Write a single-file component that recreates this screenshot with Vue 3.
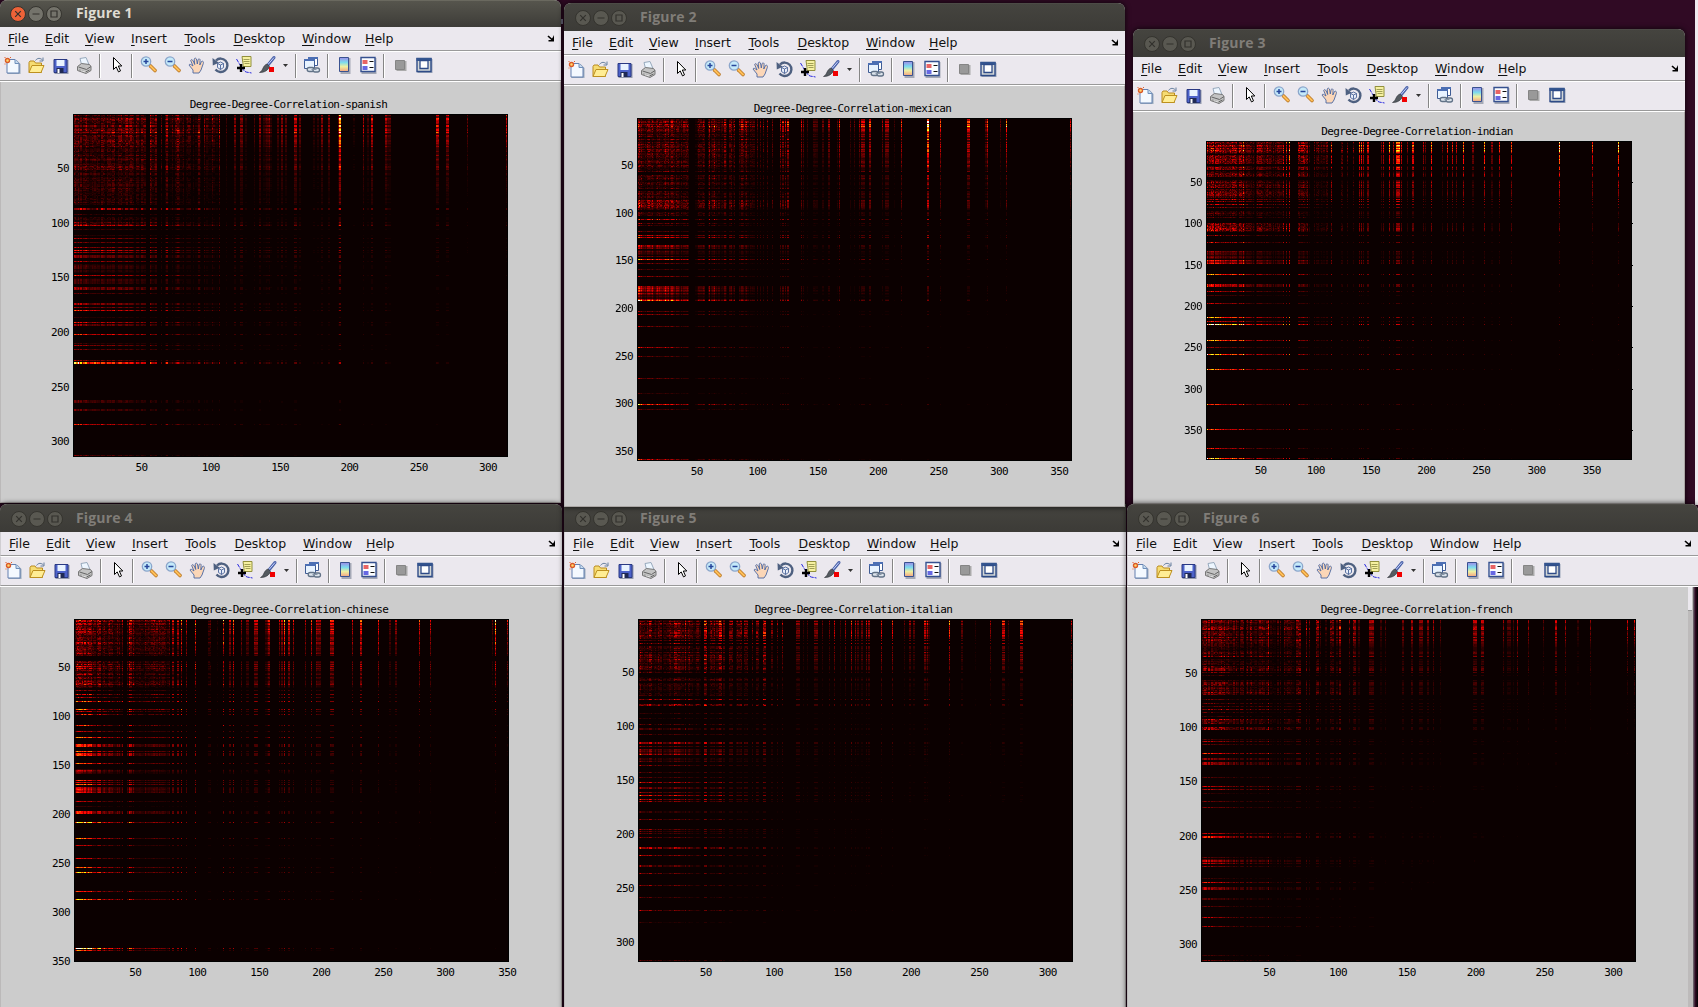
<script setup>
import { onMounted, ref } from 'vue'

const menus = ['File', 'Edit', 'View', 'Insert', 'Tools', 'Desktop', 'Window', 'Help']

// frame: extent of the axes in the units used by the cols/rows bands ("from-to:level" or "at:level")
const figures = [
  {
    id: 1, name: 'spanish', n: 314, x: 0, y: 0, w: 561, h: 503, top: 0, plotX: 73, plotY: 114, plotW: 435, plotH: 343,
    ticks: [50, 100, 150, 200, 250, 300], frame: [70, 72, 1374, 1100], decay: 5,
    cols: '70-285:.2 300-320:.2 303:.3 335:.15 348-400:.18 350:.3 384:.28 400-450:.12 446:.26 462-500:.12 465:.2 490:.25 508:.3 530:.1 555:.22 572-578:.22 590:.07 614:.14 630:.24 642-664:.22 686:.14 698:.24 708:.15 732-738:.36 751:.18 793:.08 805:.08 817:.24 838:.22 867:.22 871:.95 911:.05 943:.32 952:.12 966:.4 1006:.32 1012-1019:.16 1160-1166:.42 1192-1196:.38 1252:.18 1369:.42',
    rows: '72-130:1.1 129:1.6 130-225:.85 225-240:1 240-300:.6 300-345:.65 358:1.5 372:.5 383-405:.8 406:2.1 418:.5 436:.4 445:1.3 457:1.1 470:1.4 481:2.2 487:1.5 496-501:1.1 513:1.5 525-545:.7 558:2.1 565-580:.8 593-598:1.3 610:.8 643:1.5 652:1.3 661:2.7 680:.4 697:2.2 703:1.3 706:1.2 733:2.7 760:.5 767:1.6 778:1.1 811:1.3 819:4.6 931-935:.9 958:1 1003:2.8 1097:1.2'
  },
  {
    id: 2, name: 'mexican', n: 360, x: 564, y: 3, w: 561, h: 504, top: 4, plotX: 637, plotY: 118, plotW: 435, plotH: 343,
    ticks: [50, 100, 150, 200, 250, 300, 350], frame: [209, 354, 1383, 1383], decay: 6,
    cols: '209-305:.24 305-325:.2 330-350:.18 368-390:.16 400-420:.18 404:.32 416:.34 425-450:.15 448:.26 460-474:.22 485-525:.17 494:.28 507:.28 534:.18 542:.16 552:.16 562:.2 574:.18 598:.3 603:.32 610:.3 618:.38 652:.32 658:.2 669:.12 686-694:.2 710:.14 728:.24 750:.12 758:.4 786:.12 796:.14 810:.24 817-821:.36 839:.44 872:.24 881-886:.28 904:.08 923:.44 996:1 1028:.5 1101-1105:.5 1150:.18 1156:.55 1191:.15 1207:.6 1380:.4',
    rows: '354-385:1.1 380:1.5 385-515:.85 525-565:.65 535:.85 575-600:.7 604-610:1.2 611-628:1.2 636-645:.7 656:1.4 661:1.7 670:.8 677:.6 695:.7 707:1.7 712:1.9 738-747:1.6 750-762:.9 768:.8 778:2.7 790:.9 808:.6 829:1.1 859-864:1.4 865-880:1.7 881-895:.8 898:1.6 904:3.6 935:.9 944:1.3 961:1.9 979:1 1042:1.7 1069:.8 1135:1 1180:.5 1213:3.2 1228:.8 1378:2.2'
  },
  {
    id: 3, name: 'indian', n: 386, x: 1133, y: 29, w: 552, h: 475, top: 30, plotX: 1206, plotY: 141, plotW: 426, plotH: 319,
    ticks: [50, 100, 150, 200, 250, 300, 350], frame: [234, 423, 1388, 1379], decay: 5.5, outerTicks: true,
    cols: '234-340:.27 336:.45 343-365:.15 373-400:.21 400-430:.16 430-440:.19 443:.37 452:.38 462:.55 485-510:.26 497:.33 516:.1 528:.16 533-562:.16 576:.4 601-606:.15 617:.18 636:.16 649:.5 656:.5 661:.36 669-674:.38 708:.2 716:.33 730:.6 742:.28 752-756:.64 763:.4 780:.22 794-797:.48 823:.28 828:.16 845:.6 874:.16 888:.42 901:.4 912:.33 932:.58 958:.2 986:.66 1007-1011:.2 1030:.44 1062:.5 1192:.85 1281:.52 1353:.82',
    rows: '423-460:1.1 465-490:.95 500-510:.9 515-530:.8 540-562:1.05 568-580:.75 585-592:.75 600:1.1 604:1 613:1.1 622:.7 635-645:.7 650:.55 667:1.5 672-695:1.25 706:.8 728:1 739:.8 756-775:.75 779-789:1.5 823:2.1 853-859:1.3 874:1.2 886:.4 910:1 952:2.5 964:1.4 973:4 1021:2.7 1043:.7 1063:3 1081:1.7 1108:2.5 1213:1.9 1288:2.1 1345:1.7 1375:3.6'
  },
  {
    id: 4, name: 'chinese', n: 351, x: 0, y: 504, w: 562, h: 520, top: 505, plotX: 74, plotY: 619, plotW: 435, plotH: 343,
    ticks: [50, 100, 150, 200, 250, 300, 350], frame: [204, 387, 1399, 1415], decay: 5,
    cols: '204-250:.26 250-275:.26 280-335:.17 350-380:.25 357:.4 385-425:.18 430-465:.18 477:.3 489:.3 499:.4 514:.28 536-539:.42 574:.1 580:.12 599:.05 617:.48 634:.28 642:.52 665:.24 676-685:.16 702-708:.3 731-742:.32 768:.26 775:.26 782:.66 792-796:.42 808:.33 840:.26 857:.46 870:.34 876-882:.24 907-914:.4 970:.33 991-995:.5 1041:.44 1071:.14 1088:.24 1154:.44 1185:.34 1353:.15 1360-1363:.74 1396:.33',
    rows: '387-420:1.15 420-460:1 460-495:.9 512-550:1 550-592:.8 583:1.3 600:.6 613:1.3 622:.9 634:1.8 645:1.1 658:1.8 666:1.1 674:1.4 707:1.3 724:1 742:2 761-767:1.5 785:1.8 791-798:1.5 820:1.8 838-850:.9 870:1.5 877:1.2 883:1.9 892-909:1.4 934:1 948:.3 965-969:1.5 997:3 1046:2 1066:1.1 1105:1.2 1132:2.1 1147:2.7 1204:1.8 1228:2.8 1375:4.8 1381:2.1 1411:2.2'
  },
  {
    id: 5, name: 'italian', n: 318, x: 564, y: 504, w: 562, h: 520, top: 505, plotX: 638, plotY: 619, plotW: 435, plotH: 343,
    ticks: [50, 100, 150, 200, 250, 300], frame: [212, 387, 1387, 1415], decay: 6.5,
    cols: '212-275:.21 282-300:.21 300-340:.22 345-380:.17 391-396:.32 402-430:.17 433-438:.3 445:.16 459-466:.17 479-492:.18 501-507:.17 522:.18 532:.2 538:.16 550-556:.34 573:.15 590:.18 603:.22 639-646:.17 660:.08 670:.1 689-697:.18 709:.12 728:.16 743:.28 757:.1 773:.22 787:.36 798:.24 805:.15 817:.16 829:.28 836:.24 869:.34 899:.36 932:.12 946:.2 957:.14 989-998:.3 1055:.48 1086:.15 1126:.06 1166:.22 1198-1202:.36 1212:.1 1247-1250:.4 1383:.25',
    rows: '387-435:1.15 435-445:1.2 452:.9 460:1.2 470-480:.7 488-520:1 511:1.3 520-550:.8 560-572:.9 580-615:.6 618:.6 629:1.8 641-647:1.5 672:.5 685:.4 705:.7 718:.8 734:.7 758:1.8 767:1.1 778-790:1 794:2 803-815:1 826:1.1 845:.7 863:.8 878:2 890:1.2 895:1.2 906:1.3 917:2.7 927:1.8 934:1.5 964:.6 988:1.2 1018:1.2 1024:.9 1030:.9 1042:1.1 1073-1077:2.1 1096:1.9 1126:1.2 1150:1.4 1186:1.4 1222:.9 1261:1.7 1294:.5 1411:1'
  },
  {
    id: 6, name: 'french', n: 316, x: 1127, y: 504, w: 571, h: 520, top: 505, plotX: 1201, plotY: 619, plotW: 435, plotH: 343,
    ticks: [50, 100, 150, 200, 250, 300], frame: [220, 387, 1399, 1415], decay: 7,
    cols: '220-260:.2 260-294:.2 296-320:.16 329-335:.14 343-400:.17 403:.38 410-420:.1 428:.12 437:.12 448-475:.18 479-487:.23 508:.25 516:.16 533-537:.22 545:.12 560:.08 570-576:.18 588:.14 598:.32 624:.18 633-637:.24 649:.12 679-685:.24 709:.09 721:.12 768:.18 791-796:.24 813-821:.2 836:.22 849:.25 869:.14 960-965:.3 981-985:.3 1041:.22 1051-1060:.14 1068:.12 1078:.33 1108:.24 1148:.12 1181-1184:.34 1208:.28 1243:.08 1277:.2 1376:.32 1396:.36',
    rows: '387-395:1 395-460:1.05 460-485:.6 485-500:1.2 508-522:.7 530-540:1 547:1 556:.5 572-600:.85 600-612:1.4 615:.8 628:.6 640:.8 649:.9 658:1.3 668:.6 680:.5 691-698:1.4 713-719:1.2 748:.5 754:1.2 763:.7 790:2 808:1 816-823:1.2 863:.6 888:1.6 898:1.4 910:.4 935:.8 952:.9 1030:1.6 1036-1042:2.2 1102:.7 1110-1120:1.5 1127:1.1 1163:.5 1178:2.1 1192-1198:1.4 1225:.7 1249:.8 1280:1.6 1306:1.4 1396:.6 1411:1'
  }
]

const random = (seed) => () => {
  seed = (seed + 0x6d2b79f5) | 0
  let t = Math.imul(seed ^ (seed >>> 15), 1 | seed)
  t = (t + Math.imul(t ^ (t >>> 7), 61 | t)) ^ t
  return ((t ^ (t >>> 14)) >>> 0) / 4294967296
}

const profile = (spec, lo, hi, n, rnd) => {
  const out = new Float32Array(n)
  const cell = (v) => Math.max(0, Math.min(n - 2, Math.floor(((v - 1.5 - lo) / (hi - lo)) * n)))
  for (const band of spec.split(' ')) {
    const [range, level] = band.split(':')
    const [from, to = from] = range.split('-').map(Number)
    const a = cell(from)
    const b = cell(to)
    for (let i = a; i <= b; i++) {
      const value = Number(level) * (b - a > 2 ? 0.25 + rnd() * 0.9 : 1)
      out[i] = b - a > 2 ? Math.max(out[i], value) : value
    }
  }
  return out
}

// 64-step "hot" colormap
const hot = (v) => {
  const i = Math.min(63, Math.floor(v * 64)) + 1
  const clamp = (t) => Math.round(255 * Math.max(0, Math.min(1, t)))
  return [clamp(i / 24), clamp((i - 24) / 24), clamp((i - 48) / 16)]
}

const canvases = ref([])
onMounted(() => {
  figures.forEach((fig, k) => {
    const canvas = canvases.value[k]
    const ctx = canvas.getContext('2d')
    const { plotW: w, plotH: h, n } = fig
    const rnd = random(fig.id * 7919)
    const [x0, y0, x1, y1] = fig.frame
    const cols = profile(fig.cols, x0, x1, n, rnd)
    const rows = profile(fig.rows, y0, y1, n, rnd)
    const cells = new Float32Array(n * n)
    for (let r = 0; r < n; r++) {
      for (let c = 0; c < n; c++) {
        const x = c / n
        const y = r / n
        const depth = Math.max(0, Math.min(1, (y - 0.15) / 0.25))
        const topFade = 1 - 0.32 * Math.min(1, y / 0.14) * Math.min(1, x / 0.3)
        const leftBoost = 1 + 0.35 * depth * Math.exp(-x * 14)
        const fall = Math.exp(-fig.decay * 0.72 * x * y - 1.1 * x * depth) * (1 - 0.3 * y) * topFade * leftBoost
        const speckle = x < 0.35 && y < 0.32 ? 0.3 + rnd() * 1.25 : 0.8 + rnd() * 0.35
        cells[r * n + c] = cols[c] * rows[r] * fall * speckle
      }
    }
    const img = ctx.createImageData(w, h)
    for (let py = 0; py < h; py++) {
      for (let px = 0; px < w; px++) {
        const edge = px === 0 || py === 0 || px === w - 1 || py === h - 1
        const v = cells[Math.floor((py / h) * n) * n + Math.floor((px / w) * n)]
        const rgb = edge ? [0, 0, 0] : hot(v)
        img.data.set([...rgb, 255], (py * w + px) * 4)
      }
    }
    ctx.putImageData(img, 0, 0)
  })
})

const box = (f) => ({ left: f.x + 'px', top: f.y + 'px', width: f.w + 'px', height: f.h + 'px' })
const barHeight = (f) => ({ height: f.top + 27 - f.y + 'px' })
const plotBox = (f) => ({
  marginLeft: f.plotX - f.x + 'px',
  marginTop: f.plotY - (f.top + 82) + 'px',
  width: f.plotW + 'px',
  height: f.plotH + 'px'
})
const at = (t, f) => ((t - 0.5) / f.n) * 100 + '%'
</script>

<template>
  <div class="desktop">
    <div class="edge"></div>
    <div class="speck"></div>
    <section v-for="f in figures" :key="f.id" class="win" :class="['win' + f.id, { active: f.id === 1 }]" :style="box(f)">
      <header class="titlebar" :style="barHeight(f)">
        <div class="buttons">
          <svg class="btn close" viewBox="0 0 16 16"><circle cx="8" cy="8" r="7.5" /><path d="M5.2 5.2l5.6 5.6M10.8 5.2l-5.6 5.6" /></svg>
          <svg class="btn" viewBox="0 0 16 16"><circle cx="8" cy="8" r="7.5" /><path d="M4.5 8h7" /></svg>
          <svg class="btn" viewBox="0 0 16 16"><circle cx="8" cy="8" r="7.5" /><path d="M5 5h6v6h-6z" /></svg>
        </div>
        <h1>Figure {{ f.id }}</h1>
      </header>
      <nav class="menubar">
        <span v-for="m in menus" :key="m"><u>{{ m[0] }}</u>{{ m.slice(1) }}</span>
        <svg class="dock" viewBox="0 0 8 7"><path d="M1 1l4.5 4" fill="none" stroke="#000" stroke-width="1.6" /><path d="M7 0v6.5H1.5V5H4l2-3z" /></svg>
      </nav>
      <div class="toolbar">
        <svg width="470" height="28" viewBox="0 0 470 28">
          <g class="rule">
            <path d="M99.5 2v24M131.5 2v24M295.5 2v24M327.5 2v24M383.5 2v24" />
            <path class="light" d="M100.5 2v24M132.5 2v24M296.5 2v24M328.5 2v24M384.5 2v24" />
          </g>
          <g transform="translate(.5 2)">
            <!-- new -->
            <path d="M7 6h9l4 4v10H7z" fill="#9aaabc" />
            <path d="M6.500 5.500h8l4 4v9.500h-12z" fill="#f4f9ff" stroke="#6580b0" />
            <path d="M14.500 5.500v4h4" fill="#c7dcf0" stroke="#6f8fbb" />
            <path d="M4 3.500h1M9.500 3.500h1M4 10h1" stroke="#e06030" />
            <circle cx="7" cy="6.500" r="2" fill="#ffd870" stroke="#db5b28" stroke-width="1.400" />
            <!-- open -->
            <path d="M28.500 18.500V8.500l1-1.500h4l1.500 2h6v9.500z" fill="#f6dc72" stroke="#b98b20" />
            <path d="M28.500 18.500l3-7h12l-3 7z" fill="#ffed94" stroke="#bd901f" />
            <path d="M35 6.500c2-3 5-2.500 7-.5M42.500 3.500v3.500h-3.500" fill="none" stroke="#667f9e" />
            <!-- save -->
            <path d="M54 6h14v14H54z" fill="#949aae" />
            <path d="M53.500 5.500h13v13h-13z" fill="#4d62c9" stroke="#2a3983" />
            <path d="M56 6h8v6h-8z" fill="#e9f3ff" /><path d="M56 14h7v5h-7z" fill="#1f2954" /><path d="M57 15h2v4h-2z" fill="#fff" />
            <!-- print -->
            <path d="M79.500 4.500l6-1 3 7-7 2z" fill="#edf6ff" stroke="#98aabd" />
            <path d="M77 12.500l4-3 8 1 1.500 2v4l-5 3-8.500-3z" fill="#c3c3c3" stroke="#777" />
            <path d="M78 13l8 2.500 4.500-3M79 16l6 2 4-2" fill="none" stroke="#666" /><path d="M80 16.500l5 1.500" stroke="#eee" />
            <!-- pointer -->
            <path d="M113 3.500v12l2.700-2.600 2.300 5 2-1-2.200-4.900h3.500z" fill="#fff" stroke="#000" />
            <!-- zoom in / out -->
            <g v-for="(zx, zi) in [140, 164]" :key="zx" :transform="`translate(${zx} 2)`">
              <path d="M10 10l4.500 4.500" stroke="#b87523" stroke-width="3.600" stroke-linecap="round" />
              <path d="M10 10l4.500 4.500" stroke="#ffbf57" stroke-width="2" stroke-linecap="round" />
              <circle cx="5.500" cy="5.500" r="4.700" fill="#c5eafa" stroke="#8ca6cb" stroke-width="1.300" />
              <path :d="zi ? 'M3 5.500h5' : 'M3 5.500h5M5.500 3v5'" stroke="#27479c" stroke-width="1.500" />
            </g>
            <!-- pan -->
            <path d="M192.500 19v-3l-4-5c.5-1.500 2-.5 4 1l-2.300-5.500c.5-1.500 2-1 3 1.500l1 2.500-.5-5.500c.7-1.500 2.200-1 2.500 1l.6 4 .8-4.500c1-1.200 2.200-.5 2 1l-.3 4.500 1.700-3.500c1.500-1 2.300.5 1.800 2l-2.300 6.500-2 3z" fill="#fbd6b7" stroke="#4b66a0" stroke-width=".9" />
            <!-- rotate -->
            <path d="M215.500 6.500a6.700 6.700 0 1 1-.5 9" fill="none" stroke="#4e6080" stroke-width="2.400" />
            <path d="M212 4l.3 7.500 6-2.700z" fill="#4e6080" />
            <path d="M217 9.500l3-1.500 3 1.500v4l-3 2-3-2zM217 9.500l3 1.500 3-1.500M220 11V15.500" fill="#e7edf9" stroke="#4c6598" stroke-width=".9" />
            <!-- data cursor -->
            <path d="M236 5l3 5 4 6c2 3 5 2 8 3" fill="none" stroke="#2828e0" stroke-dasharray="4 1" />
            <path d="M241.500 2.500h9v10h-8v-3z" fill="#f6f1a0" stroke="#92903d" />
            <path d="M243 5.500h6M243 7.500h6M244 9.500h5" stroke="#8c8a43" stroke-width=".8" />
            <path d="M240.500 10v8M236.500 14h8" stroke="#000" stroke-width="2.400" />
            <!-- brush -->
            <path d="M273.500 3.500l-6 7.500" stroke="#4a62a8" stroke-width="3" stroke-linecap="round" /><path d="M273.500 3.500l-6 7" stroke="#cbd5ff" />
            <path d="M266.500 10l2.500 2.500c-1.500 4-5 6-10 6 4-2 3-7 7.500-8.500z" fill="#555b60" stroke="#30343a" stroke-width=".6" />
            <path d="M268.500 13h5v5h-5z" fill="#f00000" />
            <path d="M282.500 10h5l-2.500 3z" fill="#333" />
            <!-- link -->
            <path d="M308 3.500h9v8h-9z" fill="#fff" stroke="#3f5c94" /><path d="M307.500 3h10v2h-10z" fill="#4c6fb4" />
            <path d="M304 5.500h10v9h-10z" fill="#e8f3ff" stroke="#3f5c94" /><path d="M303.500 5h11v2h-11z" fill="#4c6fb4" />
            <rect x="306.700" y="13.500" width="7" height="4" rx="2" fill="#dce4ec" stroke="#617287" stroke-width="1.300" />
            <rect x="312.500" y="14" width="6.500" height="4" rx="2" fill="#dce4ec" stroke="#617287" stroke-width="1.300" />
            <path d="M311 15.500h5" stroke="#8795a6" />
            <!-- colorbar -->
            <path d="M340 4h10v16h-10z" fill="#a5a9b6" />
            <path d="M339 3.500h9v14h-9z" fill="url(#spectrum)" stroke="#3a5290" />
            <!-- legend -->
            <path d="M361 4h15v16h-15z" fill="#a5a9b6" />
            <path d="M360.500 3.500h14v14h-14z" fill="#fbfdff" stroke="#35508f" stroke-width="1.400" />
            <path d="M362 6h5v4h-5z" fill="#e86464" /><path d="M362 12h5v4h-5z" fill="#6668e3" />
            <path d="M369 7.500h4M369 13.500h4" stroke="#111" />
            <!-- hide / show tools -->
            <path d="M396 7h10v10h-10z" fill="#aaa" /><path d="M395 6.500h9v9h-9z" fill="#999" stroke="#858585" />
            <path d="M417 5h15v14h-15z" fill="#9ba5b8" />
            <path d="M416.500 4.500h14v13h-14z" fill="#d4d8d7" stroke="#2e4b87" stroke-width="1.400" />
            <path d="M416 4h15v3h-15z" fill="#34558f" />
            <path d="M419.500 6.500h8v8h-8z" fill="#fff" stroke="#2e4b87" stroke-width="1.300" />
          </g>
          <defs>
            <linearGradient id="spectrum" x2="0" y2="1"><stop stop-color="#9d8be8" /><stop offset=".35" stop-color="#7bdbee" /><stop offset=".65" stop-color="#eff0a0" /><stop offset="1" stop-color="#f3a483" /></linearGradient>
          </defs>
        </svg>
      </div>
      <main class="figure">
        <div class="axes" :style="plotBox(f)">
          <canvas ref="canvases" :width="f.plotW" :height="f.plotH"></canvas>
          <h2>Degree-Degree-Correlation-{{ f.name }}</h2>
          <span v-for="t in f.ticks" :key="'x' + t" class="tick xt" :style="{ left: at(t, f) }">{{ t }}</span>
          <span v-for="t in f.ticks" :key="'y' + t" class="tick yt" :class="{ out: f.outerTicks }" :style="{ top: at(t, f) }">{{ t }}</span>
        </div>
        <div v-if="f.id === 6" class="gutter"></div>
      </main>
    </section>
  </div>
</template>

<style>
body { margin: 0; overflow: hidden; }
</style>

<style scoped>
.desktop { position: relative; width: 1698px; height: 1007px; overflow: hidden; background: #300a24; }
.edge { position: absolute; right: 0; top: 0; width: 3px; height: 505px; background: #efebef; }
.speck { position: absolute; left: 561px; top: 19px; width: 2px; height: 5px; border: 1px solid #8a86a0; box-sizing: border-box; }
.win { position: absolute; display: flex; flex-direction: column; box-sizing: border-box; border-radius: 7px 7px 0 0; overflow: hidden; background: #ccc; box-shadow: 0 0 5px 1px rgba(0, 0, 0, .6); }
.win2 { z-index: 1; }
.titlebar { flex: none; display: flex; align-items: flex-end; box-sizing: border-box; padding: 0 0 5px 10px; gap: 14px; background: linear-gradient(#45443f, #3c3b37); border-top: 1px solid #4c4b46; }
.active .titlebar { background: linear-gradient(#56554d, #3d3c38); border-top-color: #6a695f; }
.win2 .titlebar, .win3 .titlebar, .win4 .titlebar, .win5 .titlebar, .win6 .titlebar { padding-left: 11px; gap: 13px; }
.win5 { border-top-left-radius: 0; border-top-right-radius: 0; }
.buttons { display: flex; gap: 2px; }
.btn { width: 16px; height: 16px; fill: #595851; stroke: #35342f; stroke-width: 1; }
.btn path { fill: none; stroke: #32312d; stroke-width: 1.2; }
.active .btn { fill: #74736b; }
.active .btn.close { fill: #ed6238; }
.titlebar h1 { margin: 0; height: 18px; font: 700 14px/18px "Open Sans", "Noto Sans", sans-serif; color: #807d78; white-space: nowrap; letter-spacing: .15px; }
.active .titlebar h1 { color: #dfdbd2; }
.menubar { flex: none; position: relative; display: grid; grid-template-columns: 37px 40px 46px 53.5px 49px 68.5px 63px 60px; height: 23px; padding-left: 8px; background: #ebe8ee; border-bottom: 1px solid #9a9a9a; font: 12.5px/23px "DejaVu Sans", sans-serif; color: #111; }
.menubar u { text-decoration: underline; text-underline-offset: 2px; text-decoration-thickness: 1px; }
.menubar span { white-space: nowrap; }
.dock { position: absolute; right: 6px; top: 8px; width: 8px; height: 7px; }
.toolbar { flex: none; height: 28px; border-top: 1px solid #fff; border-bottom: 1px solid #999; background: #ebe8ee; overflow: hidden; }
.toolbar svg { display: block; }
.rule { stroke: #858585; }
.rule .light { stroke: #fff; }
.figure { flex: 1; position: relative; border: 1px solid #aaa6a4; border-top: 1px solid #fff; border-left: 0; background: #ccc; box-shadow: inset 1px 0 #bbb9b9; }
.win4 .menubar, .win4 .toolbar, .win5 .menubar, .win5 .toolbar, .win6 .menubar, .win6 .toolbar { border-left: 1px solid #d0ced2; }
.win6 .figure { border-right: 0; }
.axes { position: relative; }
canvas { display: block; }
h2, .tick { position: absolute; margin: 0; font: 400 11px/12px "DejaVu Sans Mono", monospace; letter-spacing: -.64px; color: #000; white-space: nowrap; }
h2 { left: 50%; bottom: 100%; margin: 0 0 3px -2px; transform: translateX(-50%); }
.xt { top: 100%; margin: 5px 0 0; transform: translateX(-50%); }
.yt { right: 100%; margin: 1px 4px 0 0; transform: translateY(-50%); }
.yt.out::after { content: ''; position: absolute; left: calc(100% + 430px); top: 5px; width: 1px; height: 1px; background: #000; }
.gutter { position: absolute; right: 0; top: 0; bottom: 0; width: 5px; border-left: 5px solid #bdbbbb; background: linear-gradient(90deg, #77757a, #300a24 45%, #000); }
.gutter::before { content: ''; position: absolute; left: -5px; top: 0; width: 4px; height: 23px; background: #ebe8ee; border-bottom: 1px solid #999; }
</style>
